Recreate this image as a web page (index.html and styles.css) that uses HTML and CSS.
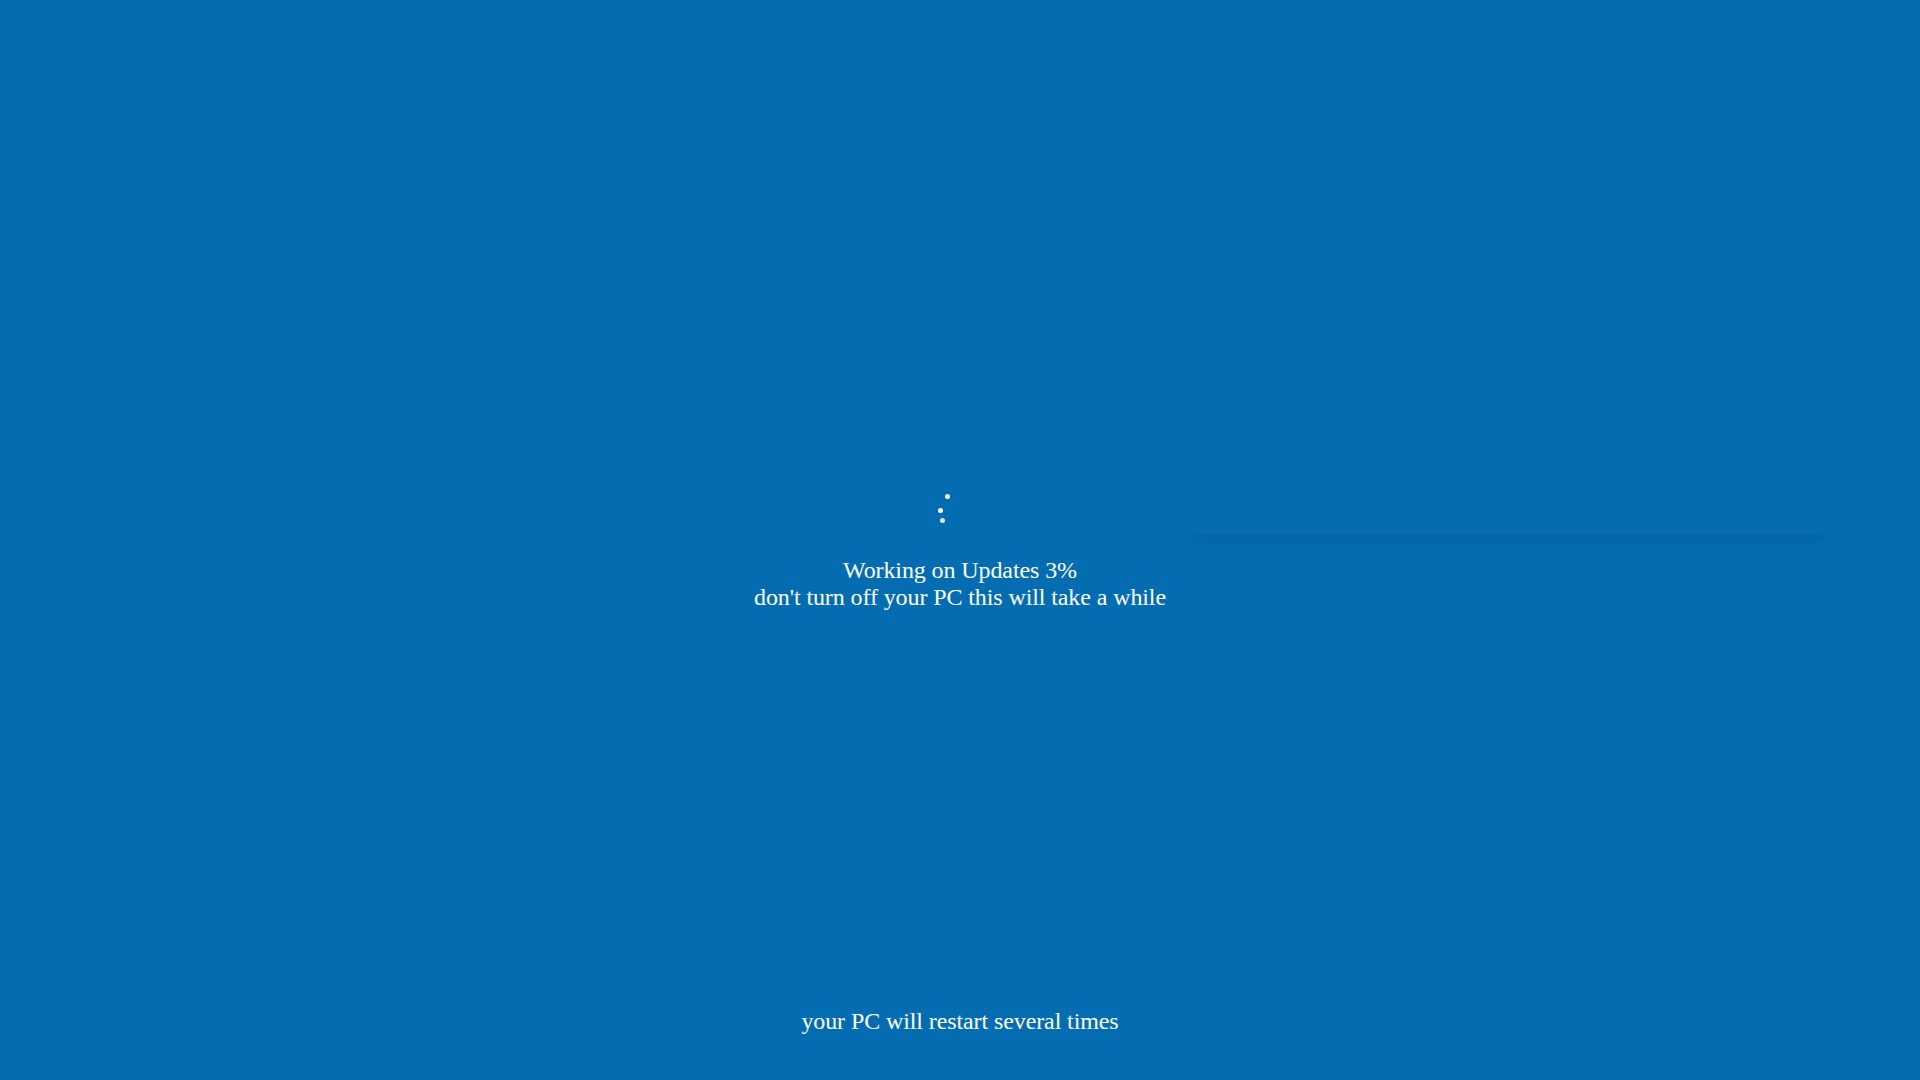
FILE: index.html
```html
<!DOCTYPE html>
<html lang="en">
<head>
<meta charset="utf-8">
<title>Working on Updates</title>
<link rel="stylesheet" href="styles.css">
</head>
<body>
<div class="screen">
  <div class="ghost-panel"></div>
  <main class="center">
    <div class="spinner" aria-hidden="true">
      <span class="dot dot-1"></span>
      <span class="dot dot-2"></span>
      <span class="dot dot-3"></span>
    </div>
    <div class="message">
      <div>Working on Updates 3%</div>
      <div>don't turn off your PC this will take a while</div>
    </div>
  </main>
  <footer class="footer">your PC will restart several times</footer>
</div>
</body>
</html>
```
FILE: styles.css
```css
html, body {
  margin: 0;
  padding: 0;
  height: 100%;
}
body {
  background: #046db2;
  color: #ffffff;
  font-family: "Liberation Serif", "Times New Roman", serif;
  font-size: 24px;
  overflow: hidden;
}
.screen {
  position: relative;
  height: 100vh;
  display: flex;
  flex-direction: column;
}
.ghost-panel {
  position: absolute;
  left: 1190px;
  top: 504px;
  width: 640px;
  height: 30px;
  background: #046db2;
  box-shadow: 0 14px 16px -6px rgba(0, 20, 60, 0.1);
}
.center {
  flex: 1;
  display: flex;
  flex-direction: column;
  align-items: center;
  padding-top: 490px;
}
.spinner {
  position: relative;
  width: 40px;
  height: 40px;
}
.dot {
  position: absolute;
  width: 5px;
  height: 5px;
  border-radius: 50%;
  background: #ffffff;
}
.dot-1 { left: 5px; top: 4px; }
.dot-2 { left: -2px; top: 18px; }
.dot-3 { left: 0px; top: 28px; opacity: 0.85; }
.message {
  margin-top: 27px;
  text-align: center;
  line-height: 27px;
  letter-spacing: -0.1px;
}
.footer {
  text-align: center;
  line-height: 27px;
  letter-spacing: -0.1px;
  padding-bottom: 45px;
}
```
